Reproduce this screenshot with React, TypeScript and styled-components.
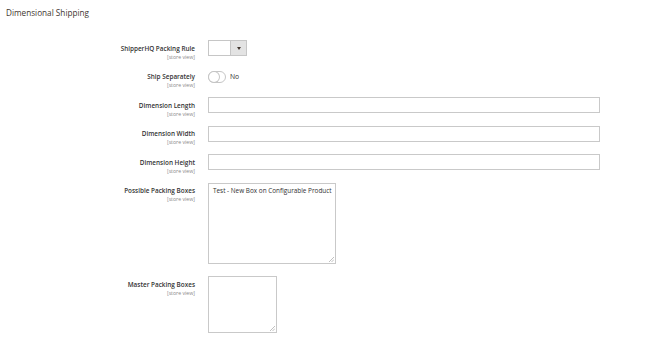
import React from "react";
import styled, { createGlobalStyle } from "styled-components";

const Global = createGlobalStyle`
  html, body { margin: 0; padding: 0; background: #fff; }
  body { font-family: "Open Sans", "Liberation Sans", sans-serif; color: #303030; }
`;

const Page = styled.div`
  width: 670px;
  height: 345px;
  overflow: hidden;
  background: #fff;
`;

const Title = styled.h2`
  margin: 0;
  padding: 7px 0 0 6px;
  height: 33px;
  box-sizing: border-box;
  font-size: 8.2px;
  font-weight: 500;
  color: #41362f;
  line-height: 12px;
`;

const Form = styled.div`
  display: flex;
  flex-direction: column;
  gap: 12.5px;
  padding-top: 7px;
`;

const Row = styled.div`
  display: grid;
  grid-template-columns: 195px 1fr;
  column-gap: 13px;
  align-items: start;
`;

const LabelCol = styled.div`
  text-align: right;
  padding-top: 2.5px;
  margin-bottom: -12px;
`;

const Label = styled.div`
  font-size: 6.4px;
  font-weight: 600;
  line-height: 11px;
  color: #333;
  white-space: nowrap;
`;

const Scope = styled.div`
  font-size: 5.2px;
  line-height: 6px;
  color: #8a8a8a;
`;

const SelectBox = styled.div`
  width: 39px;
  height: 16px;
  box-sizing: border-box;
  border: 1px solid #c6c6c6;
  display: flex;
  background: #fff;
`;

const SelectValue = styled.div`
  flex: 1;
`;

const SelectButton = styled.div`
  width: 15px;
  background: #e3e3e3;
  border-left: 1px solid #c6c6c6;
  display: flex;
  align-items: center;
  justify-content: center;
`;

const ToggleRow = styled.div`
  height: 16px;
  display: flex;
  align-items: center;
  gap: 4px;
`;

const Toggle = styled.div`
  width: 16px;
  height: 10px;
  border: 1px solid #c6c6c6;
  border-radius: 6px;
  background: #fff;
  position: relative;
  box-sizing: content-box;
`;

const Knob = styled.div`
  position: absolute;
  left: 0;
  top: 0;
  width: 10px;
  height: 10px;
  border-radius: 50%;
  background: #fff;
  box-shadow: 0 0 0 1px #c6c6c6;
`;

const ToggleText = styled.span`
  font-size: 6.8px;
  color: #303030;
`;

const Input = styled.div`
  width: 392px;
  height: 16px;
  box-sizing: border-box;
  border: 1px solid #c9c9c9;
  background: #fff;
`;

const TextArea = styled.div<{ $w: number; $h: number }>`
  width: ${(p) => p.$w}px;
  height: ${(p) => p.$h}px;
  box-sizing: border-box;
  border: 1px solid #c9c9c9;
  background: #fff;
  position: relative;
  padding: 2px 4px;
  font-size: 6.4px;
  line-height: 10px;
  color: #303030;
  white-space: nowrap;
`;

const Grip = styled.svg`
  position: absolute;
  right: 1px;
  bottom: 1px;
`;

const Resize = () => (
  <Grip width="5" height="5" viewBox="0 0 5 5">
    <path d="M5 0 L0 5 M5 2.5 L2.5 5" stroke="#b0b0b0" strokeWidth="0.8" />
  </Grip>
);

const Field = ({ label, children }: { label: string; children: React.ReactNode }) => (
  <Row>
    <LabelCol>
      <Label>{label}</Label>
      <Scope>[store view]</Scope>
    </LabelCol>
    <div>{children}</div>
  </Row>
);

export default function App() {
  return (
    <Page>
      <Global />
      <Title>Dimensional Shipping</Title>
      <Form>
        <Field label="ShipperHQ Packing Rule">
          <SelectBox>
            <SelectValue />
            <SelectButton>
              <svg width="4" height="3" viewBox="0 0 4 3">
                <path d="M0 0 L4 0 L2 3 Z" fill="#41362f" />
              </svg>
            </SelectButton>
          </SelectBox>
        </Field>
        <Field label="Ship Separately">
          <ToggleRow>
            <Toggle>
              <Knob />
            </Toggle>
            <ToggleText>No</ToggleText>
          </ToggleRow>
        </Field>
        <Field label="Dimension Length">
          <Input />
        </Field>
        <Field label="Dimension Width">
          <Input />
        </Field>
        <Field label="Dimension Height">
          <Input />
        </Field>
        <Field label="Possible Packing Boxes">
          <TextArea $w={128} $h={81}>
            Test - New Box on Configurable Product
            <Resize />
          </TextArea>
        </Field>
        <Field label="Master Packing Boxes">
          <TextArea $w={69} $h={57}>
            <Resize />
          </TextArea>
        </Field>
      </Form>
    </Page>
  );
}
